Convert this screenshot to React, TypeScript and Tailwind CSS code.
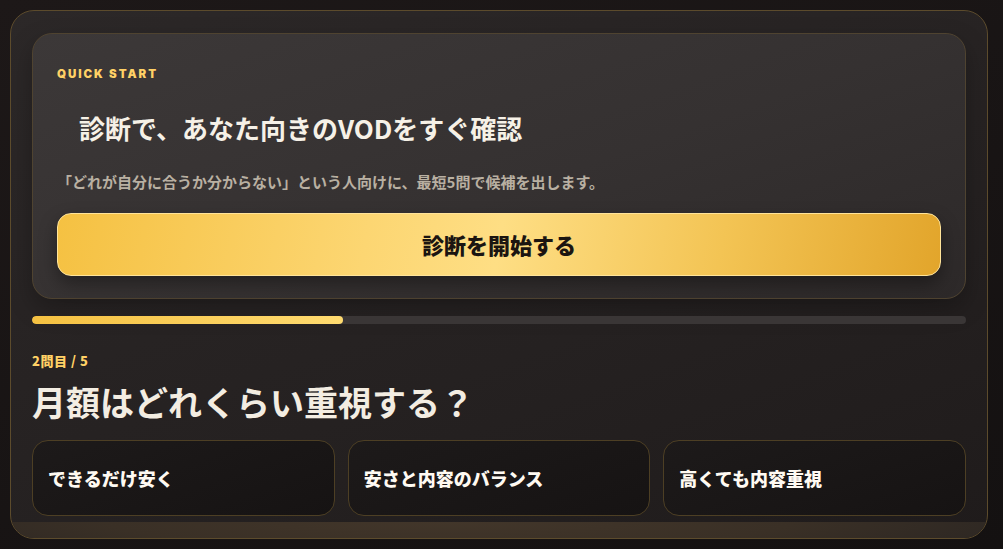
import React from 'react';

const options = ['できるだけ安く', '安さと内容のバランス', '高くても内容重視'];

export default function App() {
  const progress = 33.3;

  return (
    <div
      className="h-[549px] w-full overflow-hidden bg-[linear-gradient(160deg,#1d1818_0%,#141111_100%)] pl-[10px] pr-[15px] pt-[10px]"
      style={{ fontFamily: '"Noto Sans CJK JP", "Noto Sans", sans-serif' }}
    >
      <div className="flex h-[529px] w-[978px] flex-col overflow-hidden rounded-[24px] border border-[#5c4b2c] bg-[linear-gradient(160deg,#2c2828_0%,#252121_60%,#1f1b1b_100%)] px-[21px] pt-[22px]">
        {/* Quick start card */}
        <div className="shrink-0 rounded-[20px] border border-[#4f4330] bg-[linear-gradient(160deg,#3c3838_0%,#353131_55%,#2d2929_100%)] px-[24px] pb-[22px] pt-[32px] shadow-[0_10px_24px_rgba(0,0,0,0.25)]">
          <div
            className="text-[11.5px] font-black leading-[16px] tracking-[0.17em] text-[#ffd166]"
            style={{ fontFamily: 'Inter, "Noto Sans", sans-serif' }}
          >
            QUICK START
          </div>
          <h2 className="mt-[30px] pl-[22px] text-[26px] font-bold leading-[32px] text-[#f6f1e7]">
            診断で、あなた向きのVODをすぐ確認
          </h2>
          <p className="mt-[28px] text-[15px] font-bold leading-[20px] text-[#b9b0a2]">
            「どれが自分に合うか分からない」という人向けに、最短5問で候補を出します。
          </p>
          <button className="mt-[21px] flex h-[63px] w-full items-center justify-center rounded-[14px] border border-[#ffe49a] bg-[linear-gradient(100deg,#f5c142_0%,#fcd672_35%,#fede84_50%,#f3c454_75%,#e2a52b_100%)] text-[22px] font-black text-[#1b1511] shadow-[0_8px_18px_rgba(0,0,0,0.35)]">
            診断を開始する
          </button>
        </div>

        {/* Progress */}
        <div className="mt-[17px] h-[8px] w-full shrink-0 overflow-hidden rounded-full bg-[#3a3636]">
          <div
            className="h-full rounded-full bg-[linear-gradient(90deg,#f5c142,#ffdb70)]"
            style={{ width: `${progress}%` }}
          />
        </div>

        <div className="mt-[29px] shrink-0 text-[13px] font-black leading-[16px] tracking-[0.04em] text-[#ffd166]">
          2問目 / 5
        </div>
        <h1 className="mt-[13px] shrink-0 text-[34px] font-bold leading-[40px] text-[#f3ede2]">
          月額はどれくらい重視する？
        </h1>

        <div className="mt-[18px] grid shrink-0 grid-cols-3 gap-[13px]">
          {options.map((o) => (
            <button
              key={o}
              className="flex h-[76px] items-center rounded-[16px] border border-[#4d3f24] bg-[linear-gradient(160deg,#1d1a1a,#161313)] px-[15px] text-left text-[18px] font-black text-[#fffaf2]"
            >
              {o}
            </button>
          ))}
        </div>

        {/* next section peeking in */}
        <div className="-mx-[21px] mt-[6px] h-[40px] shrink-0 bg-[radial-gradient(ellipse_at_45%_0%,#42362a_0%,#3a3026_45%,#2a2522_85%)]" />
      </div>
    </div>
  );
}
